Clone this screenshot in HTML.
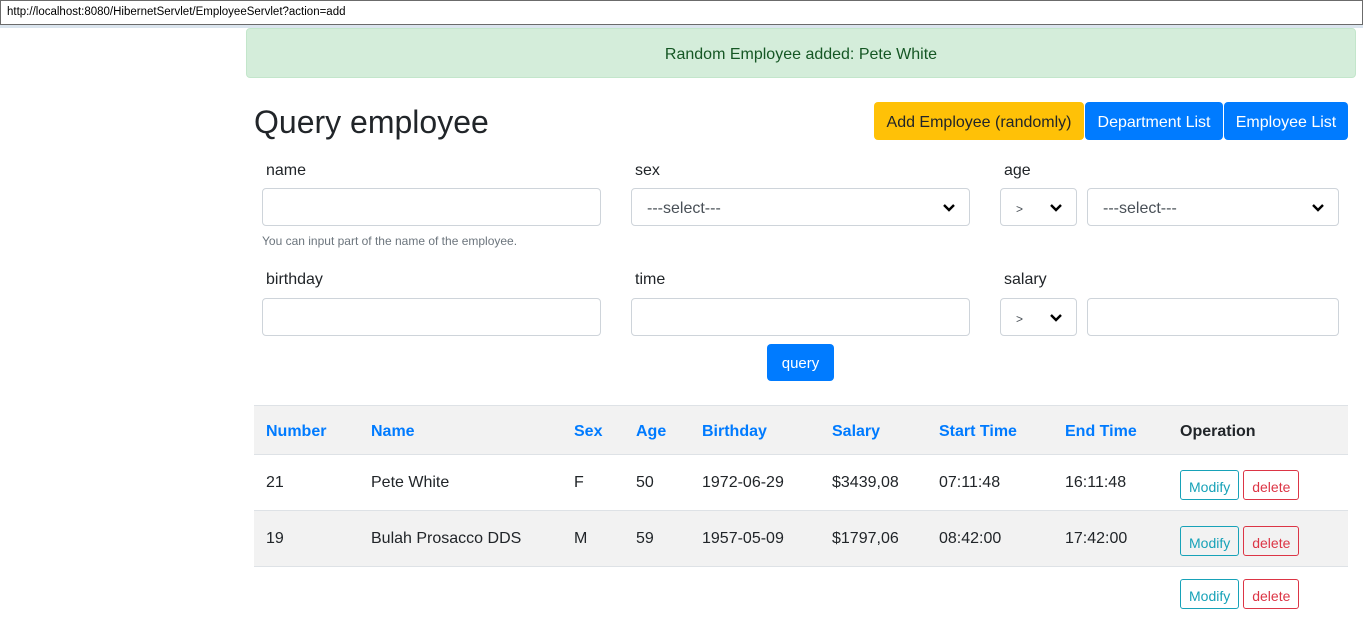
<!DOCTYPE html>
<html><head><style>
*{box-sizing:border-box;margin:0;padding:0}
body{width:1363px;height:584px;overflow:hidden;background:#fff;font-family:"Liberation Sans",sans-serif;color:#212529;position:relative}
.a{position:absolute}
.addr{left:0;top:0;width:1363px;height:25px;border:1px solid #6b6b6b;background:#fff;font-size:11.5px;padding:5px 0 0 6px;color:#000}
.strip{left:0;top:25px;width:1363px;height:3px;background:#dbe5ee}
.alert{left:246px;top:28px;width:1110px;height:50px;background:#d4edda;border:1px solid #c3e6cb;border-radius:4px;color:#155724;font-size:16px;text-align:center;line-height:52px}
h1{position:absolute;left:254px;top:104px;font-size:32px;font-weight:400}
.btn{position:absolute;top:102px;height:38px;border-radius:4px;font-size:16px;line-height:42px;text-align:center;color:#fff;background:#007bff}
.lbl{position:absolute;font-size:16px}
.in{position:absolute;height:38px;border:1px solid #ced4da;border-radius:4px;background:#fff;font-size:16px;color:#495057;padding:0 15px;line-height:40px}
.in svg{position:absolute;right:14px;top:14px}
.help{position:absolute;left:262px;top:234px;font-size:12px;color:#6c757d}
table{position:absolute;left:254px;top:405px;width:1094px;border-collapse:collapse;font-size:16px}
td,th{text-align:left;padding:0 12px;border-top:1px solid #dee2e6}
th{height:49px;color:#007bff;font-weight:700;background:#f2f2f2;padding-top:3px}
td{height:56px;padding-top:0}
tr.g td{background:#f2f2f2}
.bm,.bd{display:inline-block;border:1px solid;border-radius:3px;font-size:14px;padding:0 8px;height:30px;line-height:32px;margin-top:4px}
.bm{border-color:#17a2b8;color:#17a2b8}.bd{border-color:#dc3545;color:#dc3545;margin-left:4px}
</style></head><body>
<div class="a addr">http://localhost:8080/HibernetServlet/EmployeeServlet?action=add</div>
<div class="a strip"></div>
<div class="a alert">Random Employee added: Pete White</div>
<h1>Query employee</h1>
<div class="btn" style="left:874px;width:210px;background:#ffc107;color:#212529">Add Employee (randomly)</div>
<div class="btn" style="left:1085px;width:138px">Department List</div>
<div class="btn" style="left:1224px;width:124px">Employee List</div>
<div class="lbl" style="left:266px;top:162px">name</div>
<div class="lbl" style="left:635px;top:162px">sex</div>
<div class="lbl" style="left:1004px;top:162px">age</div>
<div class="in" style="left:262px;top:188px;width:339px"></div>
<div class="in" style="left:631px;top:188px;width:339px">---select---<svg width="12" height="9" viewBox="0 0 12 9"><path d="M1 2l5 5 5-5" stroke="#000" stroke-width="2.4" fill="none"/></svg></div>
<div class="in" style="left:1000px;top:188px;width:77px;font-size:12px">&gt;<svg width="12" height="9" viewBox="0 0 12 9"><path d="M1 2l5 5 5-5" stroke="#000" stroke-width="2.4" fill="none"/></svg></div>
<div class="in" style="left:1087px;top:188px;width:252px">---select---<svg width="12" height="9" viewBox="0 0 12 9"><path d="M1 2l5 5 5-5" stroke="#000" stroke-width="2.4" fill="none"/></svg></div>
<div class="help">You can input part of the name of the employee.</div>
<div class="lbl" style="left:266px;top:271px">birthday</div>
<div class="lbl" style="left:635px;top:271px">time</div>
<div class="lbl" style="left:1004px;top:271px">salary</div>
<div class="in" style="left:262px;top:298px;width:339px"></div>
<div class="in" style="left:631px;top:298px;width:339px"></div>
<div class="in" style="left:1000px;top:298px;width:77px;font-size:12px">&gt;<svg width="12" height="9" viewBox="0 0 12 9"><path d="M1 2l5 5 5-5" stroke="#000" stroke-width="2.4" fill="none"/></svg></div>
<div class="in" style="left:1087px;top:298px;width:252px"></div>
<div class="btn" style="left:767px;top:344px;width:67px;height:37px;line-height:40px;font-size:15px">query</div>
<table>
<tr><th style="width:105px">Number</th><th style="width:203px">Name</th><th style="width:62px">Sex</th><th style="width:66px">Age</th><th style="width:130px">Birthday</th><th style="width:107px">Salary</th><th style="width:126px">Start Time</th><th style="width:115px">End Time</th><th style="color:#212529">Operation</th></tr>
<tr><td>21</td><td>Pete White</td><td>F</td><td>50</td><td>1972-06-29</td><td>$3439,08</td><td>07:11:48</td><td>16:11:48</td><td><span class="bm">Modify</span><span class="bd">delete</span></td></tr>
<tr class="g"><td>19</td><td>Bulah Prosacco DDS</td><td>M</td><td>59</td><td>1957-05-09</td><td>$1797,06</td><td>08:42:00</td><td>17:42:00</td><td><span class="bm">Modify</span><span class="bd">delete</span></td></tr>
<tr><td></td><td></td><td></td><td></td><td></td><td></td><td></td><td></td><td style="vertical-align:top"><span class="bm" style="margin-top:12px">Modify</span><span class="bd" style="margin-top:12px">delete</span></td></tr>
</table>
</body></html>
